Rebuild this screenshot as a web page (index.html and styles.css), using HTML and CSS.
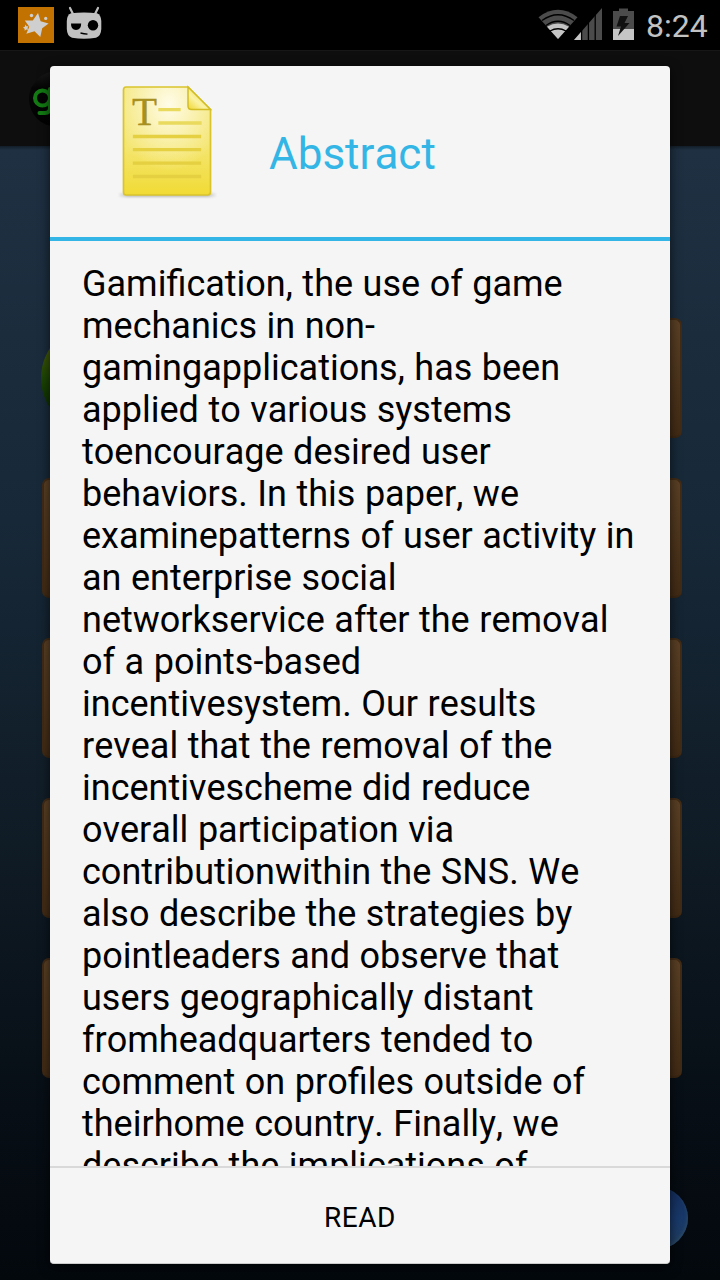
FILE: index.html
```html
<!DOCTYPE html>
<html lang="en">
<head>
<meta charset="utf-8">
<title>Abstract</title>
<link rel="stylesheet" href="styles.css">
</head>
<body>
<div class="screen">
  <header class="status">
    <svg class="notices" width="104" height="50" viewBox="0 0 104 50">
      <rect x="18" y="7" width="36" height="36" fill="#c27200"/>
      <path d="M38 13L40.600 21.300L48.600 23.400L42.200 28.300L40.300 37L34.500 31.200L26.300 33.800L29.300 26.700L24.800 20.400L32.800 20.600Z" fill="#cfcfcf"/>
      <g fill="#cfcfcf"><circle cx="31.5" cy="15.5" r="1.7"/><circle cx="45.7" cy="18.4" r="1.6"/><path d="M25.5 24.5l1 1.8 2-.1-1 1.8.6 1.8-1.9-.3-1.5 1.2-.1-2-1.6-1.3 1.8-.7z"/></g>
      <path d="M70 8l3 6M98 8l-3 6" stroke="#bdbdbd" stroke-width="2.2" stroke-linecap="round"/>
      <path d="M71 13.3Q84 11.5 97 13.3Q101 15 101.3 21V29Q101 36 96 37.7Q84 39.6 72 37.7Q67 36 66.8 29V21Q67 15 71 13.3Z" fill="#c2c2c2"/>
      <path d="M71 23.5h10.2q0 6.5-5.2 6.5t-5-6.5z" fill="#000"/><circle cx="93" cy="25.3" r="5.2" fill="#000"/><path d="M80.5 33q3.5.7 7 1.2" stroke="#000" stroke-width="1.3"/>
    </svg>
    <div class="system">
      <svg width="98" height="50" viewBox="536 0 98 50">
        <path d="M538.500 17.200Q558 2.500 577.500 17.200L558 39Z" fill="#4b4b4b"/>
        <path d="M547 26.800Q558 20 569 26.800L558 39Z" fill="#c5c5c5"/>
        <g fill="none" stroke="#000" stroke-width="1.300"><path d="M542 20.500Q558 9 574 20.500M546 25.500Q558 17 570 25.500M550 31Q558 26.500 566 31"/></g>
        <path d="M574 40L602 8V40Z" fill="#4b4b4b"/><path d="M574 40L581 32V40Z" fill="#c5c5c5"/><path d="M581.600 20V41M588.400 15V41M595.200 8V41" stroke="#000" stroke-width="1.300"/>
        <path d="M613 11h6V8.500h9V11h6V40H613Z" fill="#4b4b4b"/><path d="M613 29h21v11H613z" fill="#c5c5c5"/><path d="M620 16h8l-3.500 7h5L618 36l3-9.500h-4.500z" fill="#111"/>
      </svg>
      <time class="clock">8:24</time>
    </div>
  </header>
  <div class="actionbar">
    <svg width="100" height="96" viewBox="0 51 100 96">
      <defs><linearGradient id="logo" x2="0" y2="1"><stop stop-color="#191919"/><stop offset=".3" stop-color="#050505"/><stop offset="1" stop-color="#020202"/></linearGradient></defs>
      <circle cx="57" cy="99" r="28" fill="url(#logo)"/>
      <g fill="none" stroke="#137a13" stroke-width="4"><circle cx="42.500" cy="98" r="7.500"/><path d="M50 89V108Q50 113 45 113H39.500" stroke-linecap="round"/></g>
    </svg>
  </div>
  <main class="menu">
    <div class="row first">
      <svg class="ball" width="108" height="120" viewBox="0 0 108 120"><defs><linearGradient id="green" x2="0" y2="1"><stop offset=".2" stop-color="#485a08"/><stop offset=".5" stop-color="#1d4604"/><stop offset=".8" stop-color="#0a2c00"/></linearGradient></defs><circle cx="54" cy="60" r="54" fill="url(#green)"/></svg>
      <div class="plank"></div>
    </div>
    <div class="plank"></div><div class="plank"></div><div class="plank"></div><div class="plank"></div>
    <div class="orb"></div>
  </main>

  <section class="dialog">
    <header class="dialog-head">
      <svg class="note" width="104" height="120" viewBox="115 82 104 120">
        <defs>
          <linearGradient id="paper" x2="0" y2="1"><stop stop-color="#f4e77c"/><stop offset=".55" stop-color="#f4e56f"/><stop offset="1" stop-color="#f1db35"/></linearGradient>
          <radialGradient id="shine" cx=".52" cy=".16" r=".62"><stop stop-color="#fffce8"/><stop offset="1" stop-color="#fffce8" stop-opacity="0"/></radialGradient>
          <linearGradient id="fold" x1="0" y1="1" x2=".7" y2=".2"><stop stop-color="#efd62f"/><stop offset=".5" stop-color="#fbf3a5"/><stop offset="1" stop-color="#eedb4c"/></linearGradient>
          <linearGradient id="ground"><stop stop-color="#bbb" stop-opacity="0"/><stop offset=".1" stop-color="#bbb"/><stop offset=".9" stop-color="#bbb"/><stop offset="1" stop-color="#bbb" stop-opacity="0"/></linearGradient>
        </defs>
        <rect class="note-shadow" x="118" y="193" width="99" height="4" fill="url(#ground)"/>
        <path d="M126 87H188L210.500 109.500V192Q210.500 195 207.500 195H126Q123.500 195 123.500 192V90Q123.500 87 126 87Z" fill="url(#paper)"/>
        <path d="M126 87H188L210.500 109.500V192Q210.500 195 207.500 195H126Q123.500 195 123.500 192V90Q123.500 87 126 87Z" fill="url(#shine)" stroke="#d9c42d" stroke-width="1.700"/>
        <path d="M188 87V106Q188 109.500 191.500 109.500H210.500Z" fill="url(#fold)" stroke="#d3bd24" stroke-width="1.500"/>
        <path d="M160 109.700H179M160 123H200" stroke="#e9d95c" stroke-width="3.300" stroke-linecap="square"/>
        <path d="M134.500 136.500H199.500M134.500 149.700H199.500M134.500 163.200H199.500M134.500 176.500H199.500" stroke="#e4d040" stroke-width="3.300" stroke-linecap="square"/>
        <text class="letter" x="132" y="124.500">T</text>
      </svg>
      <h1 class="title">Abstract</h1>
    </header>
    <div class="abstract">
      <p>Gamification, the use of game<br>mechanics in non-<br>gamingapplications, has been<br>applied to various systems<br>toencourage desired user<br>behaviors. In this paper, we<br>examinepatterns of user activity in<br>an enterprise social<br>networkservice after the removal<br>of a points-based<br>incentivesystem. Our results<br>reveal that the removal of the<br>incentivescheme did reduce<br>overall participation via<br>contributionwithin the SNS. We<br>also describe the strategies by<br>pointleaders and observe that<br>users geographically distant<br>fromheadquarters tended to<br>comment on profiles outside of<br>theirhome country. Finally, we<br>describe the implications of</p>
    </div>
    <button class="read">READ</button>
  </section>
</div>
</body>
</html>
```

FILE: styles.css
```css
* { box-sizing: border-box; }
body { margin: 0; background: #000; font-family: Roboto, "Noto Sans", sans-serif; font-kerning: none; }
.screen { position: relative; width: 720px; height: 1280px; overflow: hidden; display: flex; flex-direction: column; }
.status { height: 50px; background: #000; display: flex; justify-content: space-between; }
.system { display: flex; gap: 12px; padding-right: 12px; }
.clock { color: #c2c2c2; font-size: 32px; line-height: 52px; width: 62px; }
.actionbar { height: 96px; background: #0e0e0e; border-top: 1px solid #171717; }
.actionbar svg { display: block; }
.menu { flex: 1; background: linear-gradient(#121e29, #1f3042 4px, #172838 33%, #111e29 56%, #070e15 85%, #03080d); padding: 172px 38px 0 41px; display: flex; flex-direction: column; gap: 40px; }
.plank { height: 120px; flex: none; margin-left: 1px; border: 2px solid #402b16; border-bottom-color: #3b2713; border-radius: 7px; background: linear-gradient(#5a4025, #422b15); }
.first { display: flex; }
.first .plank { flex: 1; margin-left: -20px; }
.ball { position: relative; flex: none; }
.orb { width: 62px; height: 62px; flex: none; align-self: flex-end; margin: 69px -6px 0 0; border-radius: 50%; background: linear-gradient(#142d5c, #18396a 50%, #223f61); box-shadow: inset -1px -2px 3px #294763; }
.dialog { position: absolute; left: 50px; top: 66px; width: 620px; height: 1198px; display: flex; flex-direction: column; background: #f5f5f5; border-radius: 4px; box-shadow: 0 3px 12px rgba(0,0,0,.65); border-bottom: 1px solid #ccc; }
.dialog-head { height: 175px; flex: none; display: flex; border-bottom: 4px solid #33b5e5; padding: 16px 0 0 65px; gap: 50px; }
.title { margin: 46px 0 0; color: #33b5e5; font-size: 44px; line-height: 52px; font-weight: 400; }
.note-shadow { filter: blur(1px); }
.letter { font: 41px "Liberation Serif", serif; fill: #a89020; stroke: #a89020; stroke-width: .4px; }
.abstract { flex: 1; min-height: 0; overflow: hidden; padding: 22px 0 0 32px; }
.abstract p { margin: 0; font-size: 36px; line-height: 42px; word-spacing: .6px; color: #000; white-space: nowrap; }
.read { height: 97px; flex: none; border: 0; border-top: 2px solid #d9d9d9; background: none; font: 28px Roboto, sans-serif; font-kerning: none; letter-spacing: .5px; color: #000; padding: 4px 0 0; }
```
